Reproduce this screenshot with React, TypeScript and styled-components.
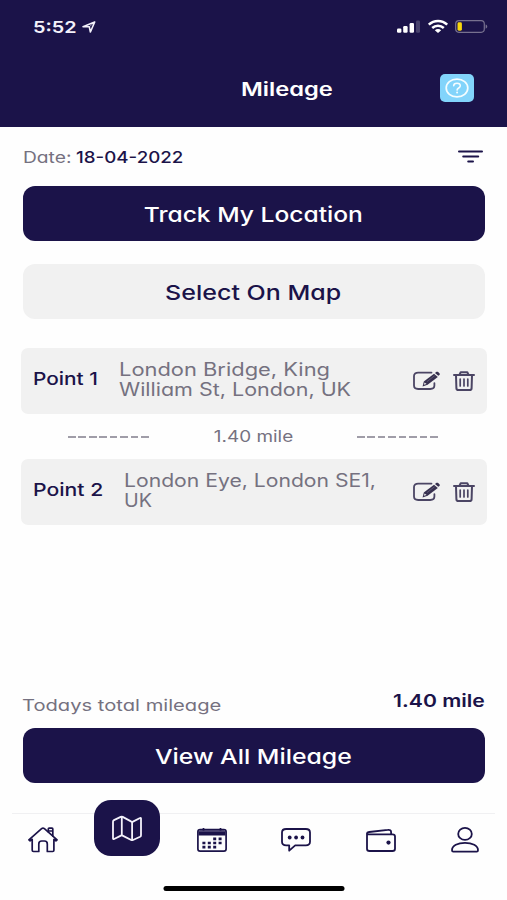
import React from 'react';
import styled, { createGlobalStyle } from 'styled-components';

const navy = '#1b1349';
const grey = '#757180';

const GlobalStyle = createGlobalStyle`
  * { box-sizing: border-box; }
  body {
    margin: 0;
    background: #fefefe;
    font-family: Inter, sans-serif;
    font-feature-settings: "cv11";
  }
  svg { display: block; flex: none; overflow: visible; }
`;

const Screen = styled.div`
  width: 507px;
  height: 900px;
  display: flex;
  flex-direction: column;
  overflow: hidden;
`;

const Label = styled.span<{
  $size: number;
  $stretch?: number;
  $weight?: number;
  $color?: string;
  $origin?: string;
}>`
  display: block;
  white-space: nowrap;
  font-size: ${p => p.$size}px;
  font-weight: ${p => p.$weight ?? 400};
  color: ${p => p.$color ?? grey};
  line-height: 20px;
  transform: scaleX(${p => p.$stretch ?? 1.2});
  transform-origin: ${p => p.$origin ?? 'left'} center;
`;

const Header = styled.header`
  height: 127px;
  background: ${navy};
  flex: none;
`;

const StatusBar = styled.div`
  height: 53px;
  padding: 0 19px 0 32.5px;
  display: flex;
  align-items: center;
`;

const Clock = styled.div`
  width: 49.5px;
`;

const StatusIcons = styled.div`
  margin-left: auto;
  display: flex;
  align-items: center;
  gap: 7.5px;
`;

const TitleBar = styled.div`
  height: 70px;
  padding: 0 33.5px 0 34px;
  display: grid;
  grid-template-columns: 1fr auto 1fr;
  align-items: center;
`;

const Title = styled.h1`
  margin: 0;
  grid-column: 2;
  padding: 1px 0 0 67px;
`;

const HelpButton = styled.button`
  justify-self: end;
  width: 34px;
  height: 28px;
  padding: 0;
  border: 0;
  border-radius: 5px;
  background: #82d4fb;
  display: grid;
  place-items: center;
`;

const Main = styled.main`
  flex: 1;
  padding: 0 22px 0 22.5px;
  display: flex;
  flex-direction: column;
`;

const DateRow = styled.div`
  height: 59px;
  display: flex;
  align-items: center;
  padding-right: 2px;
`;

const DateCaption = styled.div`
  width: 53.5px;
`;

const FilterIcon = styled.svg`
  margin-left: auto;
`;

const Button = styled.button<{ $light?: boolean }>`
  height: 55px;
  flex: none;
  padding: 2px 1px 0 0;
  border: 0;
  border-radius: 12px;
  background: ${p => (p.$light ? '#f1f1f1' : navy)};
  font-family: inherit;
  font-feature-settings: inherit;
  display: grid;
  place-items: center;
  & + & { margin-top: 23px; }
`;

const Route = styled.section`
  margin: 29px -1.5px 0;
`;

const PointCard = styled.div`
  height: 65.5px;
  padding: 0 12px;
  border-radius: 7px;
  background: #f1f1f1;
  display: flex;
  align-items: center;
`;

const PointName = styled.div<{ $width: number }>`
  width: ${p => p.$width}px;
  padding-bottom: 3px;
`;

const Address = styled.div`
  flex: 1;
  padding-bottom: 2px;
`;

const Actions = styled.div`
  display: flex;
  gap: 13px;
  align-items: center;
`;

const Leg = styled.div`
  height: 45.5px;
  padding: 1.5px 48px 0 47px;
  display: flex;
  align-items: center;
  justify-content: space-between;
`;

const Dashes = styled.div`
  width: 81px;
  height: 2px;
  background: repeating-linear-gradient(90deg, #a09da8 0 7.6px, transparent 7.6px 10.45px);
`;

const Total = styled.div`
  margin-top: auto;
  height: 44px;
  display: flex;
  justify-content: space-between;
`;

const TotalCaption = styled.div`
  padding-top: 11px;
  margin-left: -0.5px;
`;

const TotalValue = styled.div`
  padding-top: 7px;
`;

const Nav = styled.nav`
  height: 75px;
  margin-top: 30px;
  flex: none;
  display: grid;
  grid-template-columns: repeat(6, 1fr);
  justify-items: center;
  background: linear-gradient(#f0f0f2, #f0f0f2) center top / 483px 1px no-repeat;
`;

const NavItem = styled.a<{ $active?: boolean }>`
  width: 66px;
  height: 56px;
  margin-top: ${p => (p.$active ? -13 : -1)}px;
  margin-left: 1px;
  border-radius: 17px;
  background: ${p => (p.$active ? navy : 'transparent')};
  display: grid;
  place-items: center;
`;

const HomeIndicator = styled.div`
  width: 181px;
  height: 5.5px;
  margin: -2.5px auto 9px;
  flex: none;
  border-radius: 3px;
  background: #000;
  translate: 0.5px 0;
`;

const LocationArrow = () => (
  <svg width="14" height="12" viewBox="0 0 14 12" fill="none" stroke="#f3f1fa" strokeWidth="1.6" strokeLinejoin="round">
    <path d="M12.7 1 1 5.8h6.3L8.4 11z" />
    <path d="M12.7 1 7.3 5.8" strokeWidth=".6" />
  </svg>
);

const Signal = () => (
  <svg width="23" height="13" viewBox="0 0 23 13" fill="#fff">
    <rect x="0" y="8.5" width="4.4" height="4.3" rx="1.2" />
    <rect x="6.2" y="6" width="4.4" height="6.8" rx="1.2" />
    <rect x="12.6" y="3" width="4.4" height="9.8" rx="1.2" />
    <rect x="19" y="0.6" width="4" height="12.2" rx="1.2" opacity=".2" />
  </svg>
);

const Wifi = () => (
  <svg width="20" height="13" viewBox="0 0 20 13" fill="none" stroke="#fff" strokeWidth="2.5">
    <path d="M.8 4.7C6-.2 14-.2 19.2 4.7" />
    <path d="M4.2 8c3.3-3 8.3-3 11.6 0" />
    <path d="M6.8 10.3c1.9-1.6 4.5-1.6 6.4 0L10 12.9z" fill="#fff" stroke="none" />
  </svg>
);

const Battery = () => (
  <svg width="33" height="13" viewBox="0 0 33 13">
    <rect x=".7" y=".7" width="28.6" height="11.6" rx="3.2" fill="none" stroke="#77718f" strokeWidth="1.2" />
    <rect x="2.5" y="2.3" width="4.4" height="8.4" rx="1.4" fill="#f8d70d" />
    <path d="M30.6 4.5c2.2.6 2.2 3.6 0 4.2z" fill="#77718f" />
  </svg>
);

const HelpIcon = () => (
  <svg width="24" height="20" viewBox="0 0 24 20" fill="none" stroke="#f4fdff">
    <ellipse cx="12" cy="10" rx="10.8" ry="8.9" strokeWidth="1.7" />
    <path d="M8.7 7.8c0-3.5 6.6-3.5 6.6 0 0 2.3-3.2 2-3.2 4.3" strokeWidth="1.6" strokeLinecap="round" />
    <circle cx="12.1" cy="14.6" r="1" fill="#f4fdff" stroke="none" />
  </svg>
);

const EditIcon = () => (
  <svg width="27" height="20" viewBox="0 0 27 20">
    <path d="M18.5 1.6H5.2C2.6 1.6 1 2.8 1 5v9.6C1 16.8 2.6 18 5.2 18h12c2.6 0 4.2-1.2 4.2-3.4v-2.4" fill="none" stroke="#4b4564" strokeWidth="1.8" strokeLinecap="round" />
    <path d="m10.8 10.6 10.2-7.8 3.8 3.2-10.2 7.8-5 1.8z" fill="#37304f" />
    <path d="m22 2 1.1-.9c.7-.5 1.5-.5 2.1 0l1.2 1.1c.6.6.6 1.1 0 1.7l-1.1.9z" fill="#37304f" />
    <path d="m11.6 11.5-.8 2.3 2.8-.8z" fill="#f1f1f1" />
    <path d="m14 10.6 7.6-5.9" stroke="#77718a" strokeWidth=".6" />
  </svg>
);

const TrashIcon = () => (
  <svg width="22" height="20" viewBox="0 0 22 20" fill="none" stroke="#4b4564" strokeWidth="2" strokeLinecap="round" strokeLinejoin="round">
    <path d="M1 4h20M6.5 3.8 7.7 1.3h6.6l1.2 2.500M3 4.200l.4 13c0 1.100.8 1.800 2 1.800h11.200c1.200 0 2-.7 2-1.800l.4-13" />
    <path d="M7.200 8v7M11 8v7M14.800 8v7" strokeWidth="1.7" />
  </svg>
);

const HomeIcon = () => (
  <svg width="30" height="26" viewBox="0 0 30 26" fill="none" stroke={navy} strokeWidth="1.7" strokeLinejoin="round" strokeLinecap="round">
    <path d="M.9 12.8 13.6 1.7c.8-.7 2-.7 2.8 0l12.7 11.1-1.2 1.1-2-1.5v10.9c0 .7-.5 1.2-1.2 1.2h-5.4v-7.6c0-1.9-1.1-2.9-2.8-2.9h-2.8c-1.7 0-2.9 1-2.9 2.9v7.6H5.5c-.8 0-1.3-.5-1.3-1.2V12.4l-2.1 1.5z" />
    <path d="M20.3 4.7V1.9c0-.5.3-.8.8-.8h2.9c.5 0 .8.3.8.8v7M21 4h3.3" />
  </svg>
);

const MapIcon = () => (
  <svg width="30" height="25" viewBox="0 0 30 25" fill="none" stroke="#f4f2fb" strokeWidth="1.8" strokeLinejoin="round" strokeLinecap="round">
    <path d="M1 5.7c0-.7.3-1.2 1-1.6l6.7-3.2c.7-.3 1.3-.3 2 0l8.7 4.7c.6.3 1 .3 1.6 0L28 2c.7-.4 1-.1 1 .6v16.7c0 .7-.3 1.2-.9 1.5L21 24c-.7.3-1.2.3-1.8 0l-8.6-4.4c-.6-.3-1.1-.3-1.7 0L2.1 23c-.7.3-1.1 0-1.1-.7z" />
    <path d="M9.8 1v18M20.1 6v18" />
  </svg>
);

const CalendarIcon = () => (
  <svg width="30" height="24" viewBox="0 0 30 24" fill="none" stroke={navy} strokeWidth="1.7">
    <rect x=".9" y="1.6" width="28.2" height="21.5" rx="2.2" />
    <path d="M1.5 7.5V4c0-1.2.6-2 2-2h23c1.4 0 2 .8 2 2v3.5z" fill={navy} stroke="none" />
    <path d="M2 3h26" stroke="#8d87a8" strokeWidth=".8" />
    <path d="M6.5 0v2.5M23.5 0v2.5" />
    <path d="M16.2 10.8h3M21.6 10.8h3M5.4 15h3M10.8 15h3M16.2 15h3M21.6 15h3M5.4 19.2h3M10.8 19.2h3M16.2 19.2h3" strokeWidth="2.7" />
  </svg>
);

const ChatIcon = () => (
  <svg width="30" height="24" viewBox="0 0 30 24" fill="none" stroke={navy} strokeWidth="1.8" strokeLinejoin="round">
    <path d="M5.2 1h19.6C27.5 1 29 2.3 29 4.5v9.3c0 2.2-1.5 3.5-4.2 3.5H14.2L8.2 22.7v-5.4h-3C2.5 17.3 1 16 1 13.8V4.5C1 2.3 2.5 1 5.2 1z" />
    <g fill={navy} stroke="none">
      <circle cx="8.7" cy="9.5" r="1.9" />
      <circle cx="15.1" cy="9.5" r="1.9" />
      <circle cx="21.5" cy="9.5" r="1.9" />
    </g>
  </svg>
);

const WalletIcon = () => (
  <svg width="30" height="23" viewBox="0 0 30 23" fill="none" stroke={navy} strokeWidth="1.8" strokeLinejoin="round">
    <path d="M1 4.3v15.4C1 21.3 1.9 22 3.5 22h23c1.6 0 2.5-.7 2.5-2.3V7.600c0-1.600-.9-2.300-2.500-2.300h-24C1.500 5.300 1 5 1 4.300 1 3.400 1.800 3.200 3.200 3L21.800.9c2.200-.3 3.300.5 3.300 2.100v2.200" />
    <circle cx="22.5" cy="13.6" r="2.1" fill={navy} stroke="none" />
  </svg>
);

const ProfileIcon = () => (
  <svg width="28" height="26" viewBox="0 0 28 26" fill="none" stroke={navy} strokeWidth="1.8" strokeLinejoin="round">
    <ellipse cx="14" cy="6.9" rx="6.8" ry="6" />
    <path d="M1 23.2C1 18.7 6.8 15.8 14 15.8s13 2.9 13 7.4c0 1-.4 1.5-1.3 1.5H2.3c-.9 0-1.3-.5-1.3-1.5z" />
  </svg>
);

type Line = { text: string; stretch: number };
type Point = { name: string; nameWidth: number; stretch: number; lines: Line[] };

const points: Point[] = [
  {
    name: 'Point 1',
    nameWidth: 85.5,
    stretch: 1.19,
    lines: [
      { text: 'London Bridge, King', stretch: 1.216 },
      { text: 'William St, London, UK', stretch: 1.193 },
    ],
  },
  {
    name: 'Point 2',
    nameWidth: 90.5,
    stretch: 1.21,
    lines: [
      { text: 'London Eye, London SE1,', stretch: 1.175 },
      { text: 'UK', stretch: 1.1 },
    ],
  },
];

const RoutePoint = ({ point }: { point: Point }) => (
  <PointCard>
    <PointName $width={point.nameWidth}>
      <Label $size={17.5} $weight={500} $color={navy} $stretch={point.stretch}>{point.name}</Label>
    </PointName>
    <Address>
      {point.lines.map(line => (
        <Label key={line.text} $size={18} $stretch={line.stretch}>{line.text}</Label>
      ))}
    </Address>
    <Actions>
      <EditIcon />
      <TrashIcon />
    </Actions>
  </PointCard>
);

export default function App() {
  return (
    <Screen>
      <GlobalStyle />
      <Header>
        <StatusBar>
          <Clock>
            <Label $size={16.5} $weight={600} $color="#f3f1fa" $stretch={1.2}>5:52</Label>
          </Clock>
          <LocationArrow />
          <StatusIcons>
            <Signal />
            <Wifi />
            <Battery />
          </StatusIcons>
        </StatusBar>
        <TitleBar>
          <Title>
            <Label $size={18.5} $weight={600} $color="#fff" $stretch={1.28} $origin="center">Mileage</Label>
          </Title>
          <HelpButton aria-label="Help"><HelpIcon /></HelpButton>
        </TitleBar>
      </Header>
      <Main>
        <DateRow>
          <DateCaption>
            <Label $size={16}>Date:</Label>
          </DateCaption>
          <Label $size={16} $weight={500} $color={navy} $stretch={1.17}>18-04-2022</Label>
          <FilterIcon width="25" height="13" viewBox="0 0 25 13" stroke={navy} strokeWidth="2" strokeLinecap="round">
            <path d="M1 1.5h23M5.2 6.5h15M10.2 11.5h4.8" />
          </FilterIcon>
        </DateRow>
        <Button>
          <Label $size={20.5} $weight={500} $color="#fff" $stretch={1.2} $origin="center">Track My Location</Label>
        </Button>
        <Button $light>
          <Label $size={20.5} $weight={500} $color={navy} $stretch={1.22} $origin="center">Select On Map</Label>
        </Button>
        <Route>
          <RoutePoint point={points[0]} />
          <Leg>
            <Dashes />
            <Label $size={15.5} $stretch={1.22} $origin="center">1.40 mile</Label>
            <Dashes />
          </Leg>
          <RoutePoint point={points[1]} />
        </Route>
        <Total>
          <TotalCaption>
            <Label $size={16} $stretch={1.26}>Todays total mileage</Label>
          </TotalCaption>
          <TotalValue>
            <Label $size={17.5} $weight={600} $color={navy} $stretch={1.21} $origin="right">1.40 mile</Label>
          </TotalValue>
        </Total>
        <Button>
          <Label $size={20.5} $weight={500} $color="#fff" $stretch={1.21} $origin="center">View All Mileage</Label>
        </Button>
      </Main>
      <Nav>
        <NavItem aria-label="Home"><HomeIcon /></NavItem>
        <NavItem $active aria-label="Mileage"><MapIcon /></NavItem>
        <NavItem aria-label="Calendar"><CalendarIcon /></NavItem>
        <NavItem aria-label="Messages"><ChatIcon /></NavItem>
        <NavItem aria-label="Wallet"><WalletIcon /></NavItem>
        <NavItem aria-label="Profile"><ProfileIcon /></NavItem>
      </Nav>
      <HomeIndicator />
    </Screen>
  );
}
